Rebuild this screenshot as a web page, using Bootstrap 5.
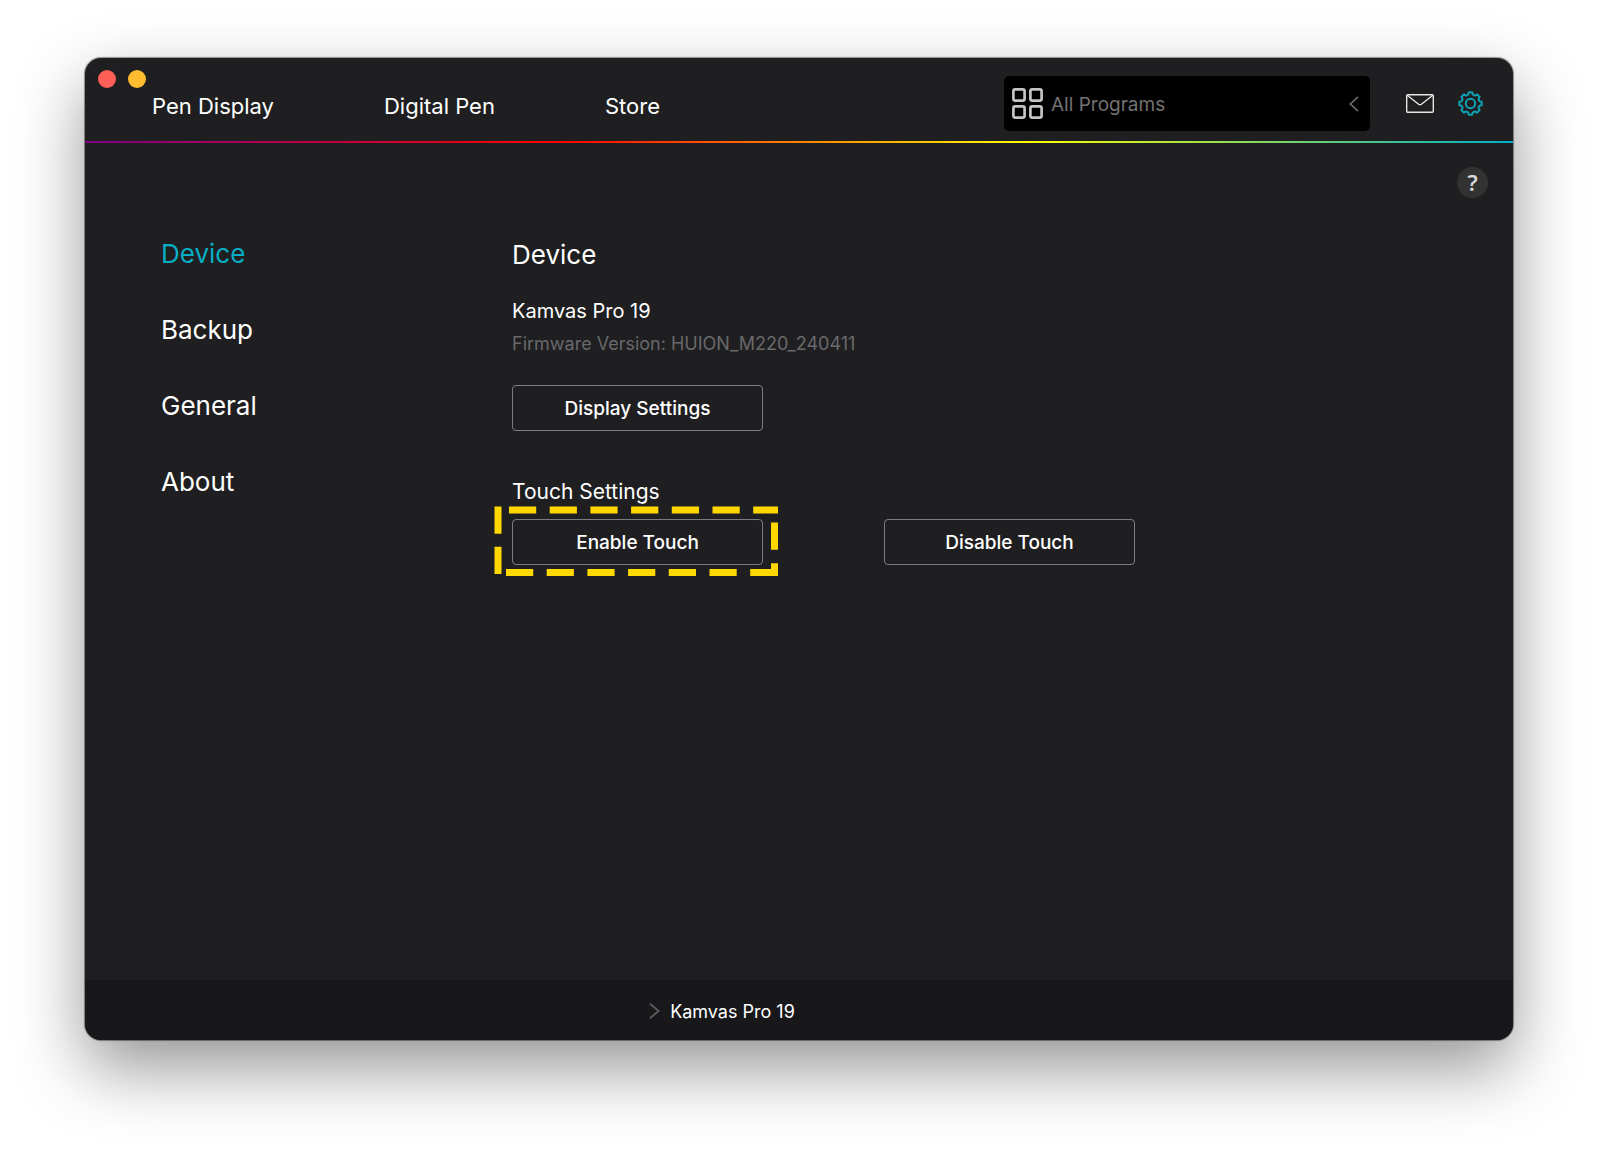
<!DOCTYPE html>
<html lang="en">
<head>
<meta charset="utf-8">
<meta name="viewport" content="width=device-width, initial-scale=1">
<title>Tablet settings</title>
<link href="https://cdn.jsdelivr.net/npm/bootstrap@5.3.0/dist/css/bootstrap.min.css" rel="stylesheet">
<style>
  body { font-family: Inter, Roboto, "Liberation Sans", sans-serif; background: #fff; padding: 58px 85px 113px; }
  .app-window {
    background: #1f1f21; color: #fff; border-radius: 16px; overflow: hidden;
    box-shadow: 0 0 1px 1px rgba(0,0,0,.4), 0 28px 68px rgba(0,0,0,.42);
  }
  .title-bar { height: 83px; padding: 8px 30px 0 13px; }
  .lights { gap: 12px; }
  .light { width: 18px; height: 18px; border: 0; border-radius: 50%; padding: 0; }
  .light-close { background: #ff5f57; }
  .light-min { background: #febc2e; }
  .top-nav { margin-left: 6px; gap: 110px; font-size: 22px; line-height: 28px; }
  .top-nav a, .side-nav a { color: #fff; text-decoration: none; white-space: nowrap; }
  .rainbow { height: 2px; background: linear-gradient(90deg, #800085, #f00 33%, #ff0 66%, #00aec8); }
  .program-box { width: 366px; height: 55px; background: #000; border-radius: 5px; padding: 0 11px 0 8px; gap: 8px; }
  .program-box select { appearance: none; background: transparent; border: 0; color: #727272; font-size: 19px; line-height: 28px; padding: 2px 0 0; }
  .icon-btn { background: none; border: 0; padding: 0; }
  .mail { margin-left: 36px; }
  .gear { margin-left: 24px; }
  .sidebar { width: 306px; padding: 93px 0 0 76px; border-right: 1px solid #1b1b1d; }
  .side-nav { gap: 40px; font-size: 26px; line-height: 36px; }
  .side-nav a.current { color: #06aec5; }
  .pane { padding: 24px 25px 40px 121px; }
  .help { width: 31px; height: 31px; border: 0; border-radius: 50%; background: #323233; color: #d8d8d8; padding: 0; font: 600 22px/31px "Noto Sans", sans-serif; }
  .pane h1 { font-size: 26px; line-height: 36px; font-weight: 400; margin: 39px 0 0; }
  .pane h2 { font-size: 21px; line-height: 28px; font-weight: 400; }
  .pane .model { font-size: 20px; margin: 24px 0 7px; }
  .firmware { font-size: 18px; line-height: 24px; color: #69696b; margin-bottom: 29px; }
  .outline-btn { width: 251px; height: 46px; border: 1px solid #7d7d7f; border-radius: 4px; background: transparent; color: #fff; font-size: 19px; font-weight: 500; padding: 3px 0 0; }
  .outline-btn:hover { color: #fff; border-color: #bbb; }
  .pane .touch-title { margin: 47px 0 13px; }
  .touch-row { gap: 121px; }
  .dash-frame { position: absolute; left: -18px; top: -13px; pointer-events: none; }
  .status-bar { height: 60px; background: #18181a; font-size: 18px; padding: 2px 154px 0 0; gap: 10px; }
</style>
<script src="https://cdn.jsdelivr.net/npm/bootstrap@5.3.0/dist/js/bootstrap.bundle.min.js"></script>
</head>
<body class="min-vh-100 d-flex flex-column">
<div class="app-window flex-grow-1 d-flex flex-column">
  <header class="title-bar d-flex align-items-center">
    <div class="lights d-flex align-self-start mt-1">
      <button class="light light-close" type="button" aria-label="Close"></button>
      <button class="light light-min" type="button" aria-label="Minimize"></button>
    </div>
    <nav class="top-nav d-flex pt-1">
      <a href="#">Pen Display</a>
      <a href="#">Digital Pen</a>
      <a href="#">Store</a>
    </nav>
    <div class="program-box d-flex align-items-center ms-auto">
      <svg width="31" height="31" viewBox="0 0 31 31" fill="none" stroke="#c4c4c4" stroke-width="2.7" aria-hidden="true">
        <rect x="1.4" y="1.4" width="11.2" height="11.2" rx="1.8"/><rect x="18.4" y="1.4" width="11.2" height="11.2" rx="1.8"/>
        <rect x="1.4" y="18.4" width="11.2" height="11.2" rx="1.8"/><rect x="18.4" y="18.4" width="11.2" height="11.2" rx="1.8"/>
      </svg>
      <select class="flex-grow-1" aria-label="Program"><option>All Programs</option></select>
      <svg width="10" height="16" viewBox="0 0 10 16" fill="none" stroke="#666" stroke-width="1.8" aria-hidden="true"><path d="M9 .8 1.2 8 9 15.2"/></svg>
    </div>
    <button class="icon-btn mail d-flex" type="button" aria-label="Messages">
      <svg width="28" height="19" viewBox="0 0 28 19" fill="none" stroke="#e6e6e6" stroke-width="1.4"><rect x=".7" y=".7" width="26.6" height="17.6" rx="1"/><path d="M1.2 1.2 12.6 10.2Q14 11.2 15.4 10.2L26.8 1.2"/></svg>
    </button>
    <button class="icon-btn gear d-flex" type="button" aria-label="Settings">
      <svg width="25" height="25" viewBox="0 0 25 25" fill="none" stroke="#0ea2b5" stroke-width="2" stroke-linejoin="round"><circle cx="12.5" cy="12.5" r="4.7"/><path id="cog" d=""/></svg>
    </button>
  </header>
  <div class="rainbow"></div>
  <div class="flex-grow-1 d-flex">
    <aside class="sidebar flex-shrink-0">
      <nav class="side-nav d-flex flex-column">
        <a class="current" href="#" aria-current="page">Device</a>
        <a href="#">Backup</a>
        <a href="#">General</a>
        <a href="#">About</a>
      </nav>
    </aside>
    <main class="pane flex-grow-1">
      <div class="d-flex justify-content-end"><button class="help" type="button" aria-label="Help">?</button></div>
      <h1>Device</h1>
      <h2 class="model">Kamvas Pro 19</h2>
      <p class="firmware">Firmware Version: HUION_M220_240411</p>
      <button class="btn outline-btn d-block" type="button">Display Settings</button>
      <h2 class="touch-title">Touch Settings</h2>
      <div class="touch-row d-flex">
        <div class="position-relative">
          <button class="btn outline-btn d-block" type="button">Enable Touch</button>
          <svg class="dash-frame" width="285" height="71" viewBox="0 0 285 71" fill="none" stroke="#ffd800" stroke-width="7" aria-hidden="true">
            <path d="M15 4H284" stroke-dasharray="27.2 13.5"/>
            <path d="M12 66.5H284" stroke-dasharray="27.2 13.5"/>
            <path d="M4 .5V68" stroke-dasharray="27.2 13"/>
            <path d="M280.5 16.5V70" stroke-dasharray="27.2 13.5"/>
          </svg>
        </div>
        <button class="btn outline-btn d-block" type="button">Disable Touch</button>
      </div>
    </main>
  </div>
  <footer class="status-bar d-flex align-items-center justify-content-center">
    <svg width="11" height="16" viewBox="0 0 11 16" fill="none" stroke="#5c5c5e" stroke-width="1.8" aria-hidden="true"><path d="M1 .8 9.6 8 1 15.2"/></svg>
    <span>Kamvas Pro 19</span>
  </footer>
</div>
<script>
  // Eight-tooth cog outline around (12.5, 12.5)
  const cog = [];
  for (let i = 0; i < 8; i++) {
    [[-9, 11.3], [9, 11.3], [13, 9.5], [22.5, 8.9], [32, 9.5]].forEach(([a, r]) => {
      const t = (i * 45 + a) * Math.PI / 180;
      cog.push((12.5 + r * Math.sin(t)).toFixed(2) + ' ' + (12.5 - r * Math.cos(t)).toFixed(2));
    });
  }
  document.getElementById('cog').setAttribute('d', 'M' + cog.join('L') + 'Z');
</script>
</body>
</html>
